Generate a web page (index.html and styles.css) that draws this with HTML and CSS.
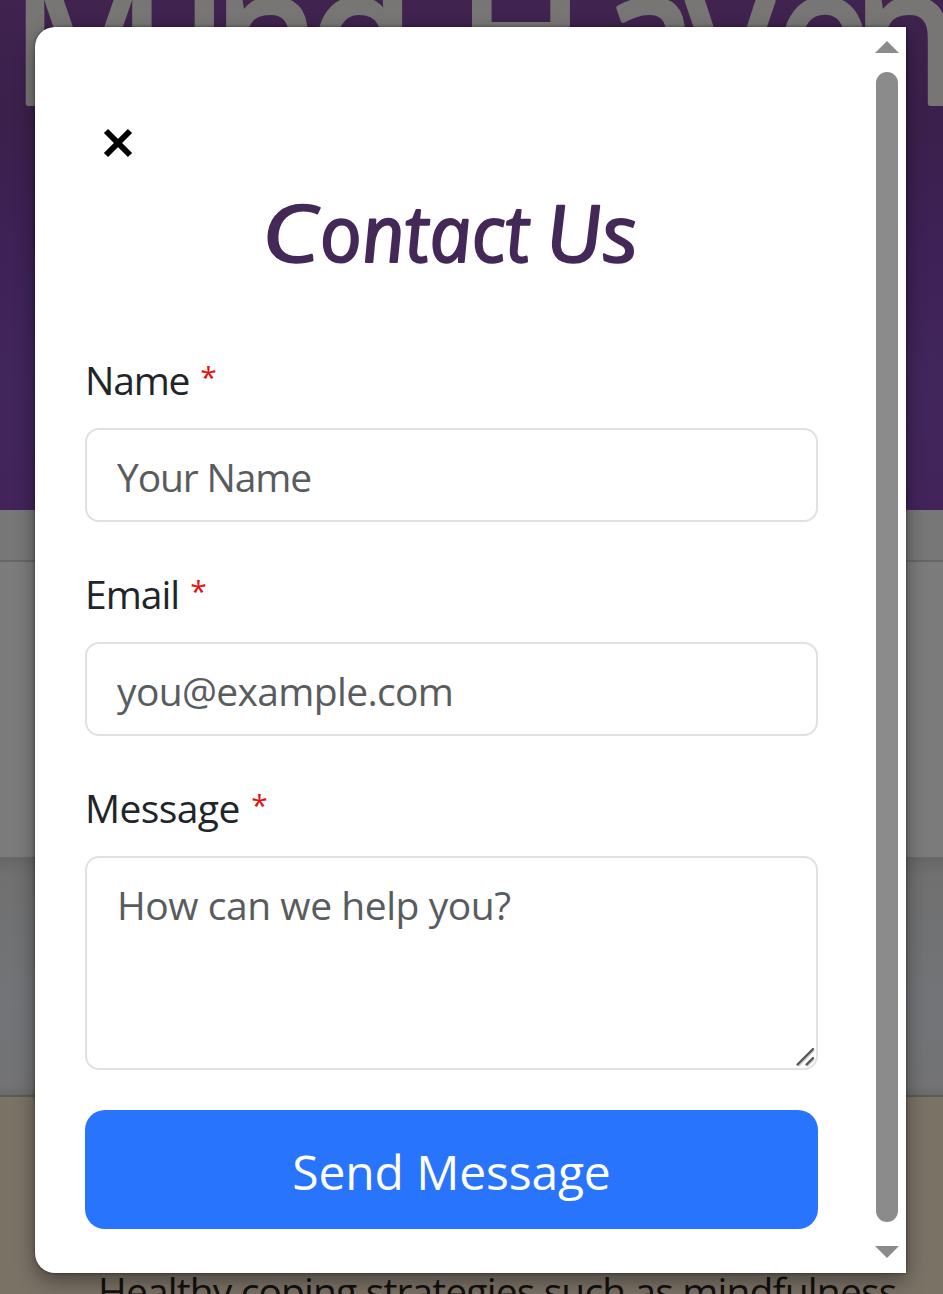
FILE: index.html
```html
<!DOCTYPE html>
<html lang="en">
<head>
<meta charset="utf-8">
<title>Contact Us</title>
<link rel="stylesheet" href="styles.css">
</head>
<body>
<div class="page">
  <header class="hero">
    <svg class="hero-title" viewBox="0 0 943 160" role="img" aria-label="Mind Haven">
      <g transform="scale(.9 1)">
        <text class="hero-word" y="103" x="13 203 238 344">Mind</text>
        <text class="hero-word" y="103" x="509 668 764 861 948">Haven</text>
      </g>
    </svg>
  </header>
  <div class="gap"></div>
  <section class="panel"></section>
  <section class="spacer"></section>
  <section class="article"><p class="article-text">Healthy coping strategies such as mindfulness</p></section>
</div>
<div class="overlay">
  <div class="modal" role="dialog">
    <div class="modal-body">
      <button class="close" aria-label="Close">
        <svg width="30" height="30" viewBox="0 0 30 30"><path d="M3 3L27 27M27 3L3 27" stroke="#000" stroke-width="6" fill="none"/></svg>
      </button>
      <svg class="heading" viewBox="0 0 420 110" width="420" height="110">
        <g transform="translate(0 82) skewX(6)">
          <text class="heading-word" y="0"><tspan x="24" textLength="57" lengthAdjust="spacingAndGlyphs">C</tspan><tspan x="82" textLength="210" lengthAdjust="spacingAndGlyphs">ontact</tspan></text>
          <text class="heading-word" y="0" x="308" textLength="92" lengthAdjust="spacingAndGlyphs">Us</text>
        </g>
      </svg>
      <form class="form">
        <div class="field">
          <label class="label label-name" for="name">Name <span class="req">*</span></label>
          <input class="input input-name" id="name" type="text" placeholder="Your Name">
        </div>
        <div class="field">
          <label class="label label-email" for="email">Email <span class="req">*</span></label>
          <input class="input input-email" id="email" type="email" placeholder="you@example.com">
        </div>
        <div class="field">
          <label class="label label-message" for="message">Message <span class="req">*</span></label>
          <div class="area-wrap">
            <textarea class="input area" id="message" placeholder="How can we help you?"></textarea>
            <svg class="grip" width="20" height="20" viewBox="0 0 20 20"><path d="M2 19L18 3M11 19L18 12" stroke="#c4c4c4" stroke-width="2"/><path d="M1.5 17.5L17 2M10.500 17.500L17 11" stroke="#555" stroke-width="2.200" stroke-linecap="round"/></svg>
          </div>
        </div>
        <button class="send" type="button">Send Message</button>
      </form>
    </div>
    <div class="scrollbar">
      <svg width="24" height="12" viewBox="0 0 24 12"><path d="M0 12L12 0L24 12Z" fill="#8b8b8b"/></svg>
      <div class="thumb"></div>
      <svg width="24" height="12" viewBox="0 0 24 12"><path d="M0 0H24L12 12Z" fill="#8b8b8b"/></svg>
    </div>
  </div>
</div>
</body>
</html>
```
FILE: styles.css
```css
* { box-sizing: border-box; }
body { margin: 0; height: 1294px; overflow: hidden; font-family: "Open Sans", "Noto Sans", sans-serif; }
.page { height: 1294px; overflow: hidden; display: flex; flex-direction: column; }
.hero { height: 510px; flex: none; background: linear-gradient(180deg, #40234f 0, #3b204c 120px, #3e2156 240px, #41265c 380px, #42245a 510px); }
.hero-title { display: block; width: 943px; height: 160px; }
.hero-word { font-family: "Open Sans", sans-serif; font-size: 190px; fill: #777675; stroke: #777675; stroke-width: 6px; stroke-linejoin: round; }
.gap { height: 50px; flex: none; background: #777; }
.panel { height: 297px; flex: none; background: #7b7b7b; border-top: 2px solid #676767; }
.spacer { height: 238px; flex: none; background: linear-gradient(180deg, #676767 0, #707070 18px, #727477 60%, #737375 96%, #6a6a6a 100%); }
.article { flex: 1; background: #7b7266; border-top: 2px solid #5e5a54; padding: 167px 0 0 98px; }
.article-text { margin: 0; font-size: 39px; line-height: 54px; letter-spacing: -.87px; white-space: nowrap; color: #12110f; }
.overlay { position: absolute; inset: 0; padding: 27px 37px 21px 35px; }
.modal { width: 871px; height: 1246px; display: flex; background: #fff; border-radius: 20px 0 0 20px; box-shadow: 0 8px 20px rgba(0,0,0,.4), 0 0 3px rgba(0,0,0,.5); }
.modal-body { width: 833px; padding: 101px 50px 44px; display: flex; flex-direction: column; }
.close { margin: 0 0 22px 18px; width: 30px; height: 30px; border: 0; padding: 0; background: none; }
.close svg { display: block; }
.heading { display: block; margin-left: 155px; flex: none; }
.heading-word { font-family: "Open Sans", sans-serif; font-style: italic; font-size: 79px; fill: #432858; stroke: #432858; stroke-width: 2px; stroke-linejoin: round; }
.form { display: flex; flex-direction: column; margin-top: 60px; }
.field { display: flex; flex-direction: column; margin-bottom: 42px; }
.field:last-of-type { margin-bottom: 40px; }
.label { height: 60px; font-size: 39px; line-height: 60px; margin-bottom: 18px; color: #212529; }
.label-name { letter-spacing: -1.2px; }
.label-email { letter-spacing: -1px; }
.label-message { letter-spacing: -.6px; }
.req { margin-left: 2px; font-size: 30px; line-height: 0; vertical-align: 7px; color: #e80f0f; }
.input { width: 733px; height: 94px; border: 2px solid #dfe1e3; border-radius: 14px; background: #fff; padding: 11px 30px 9px; font: 39px/56px "Open Sans", sans-serif; outline: 0; }
.input-name { letter-spacing: -1.15px; }
.input-email { letter-spacing: -.65px; }
.input::placeholder { color: #595c5f; opacity: 1; }
.area-wrap { position: relative; height: 214px; }
.area { display: block; height: 214px; padding-top: 19px; letter-spacing: -.45px; resize: none; overflow: hidden; }
.grip { position: absolute; right: 2px; bottom: 3px; }
.send { width: 733px; height: 119px; border: 0; border-radius: 20px; background: #2874fc; color: #fff; font: 48px/1.4 "Open Sans", sans-serif; letter-spacing: -.15px; padding: 4px 0 0; }
.scrollbar { width: 38px; padding: 14px 7px 15px 7px; display: flex; flex-direction: column; align-items: center; }
.scrollbar svg { display: block; flex: none; }
.thumb { width: 22px; height: 1150px; margin: 19px 0 24px; border-radius: 11px; background: #8b8b8b; flex: none; }
```
